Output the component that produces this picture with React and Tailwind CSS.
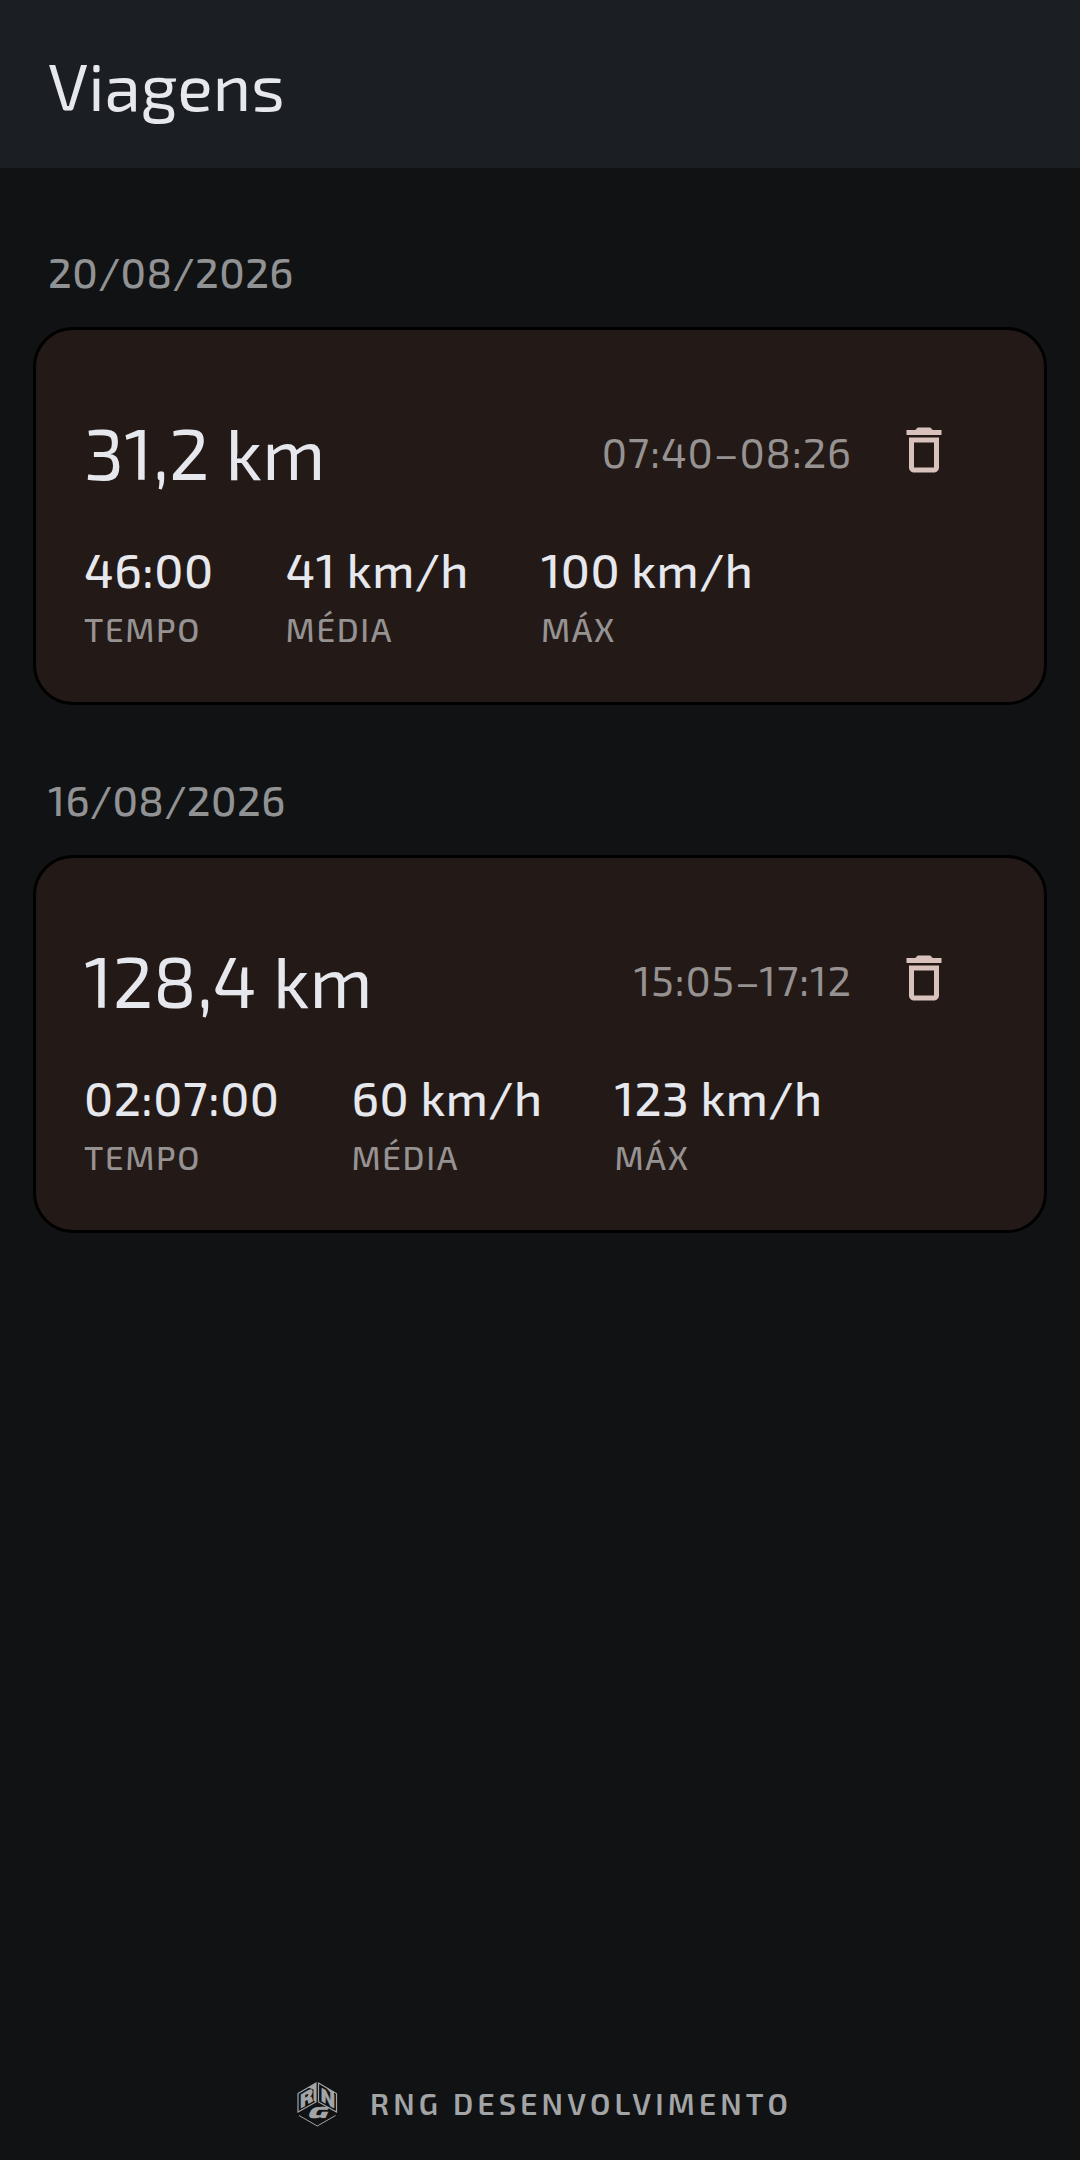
import { MdDeleteOutline } from 'react-icons/md';

const trips = [
  {
    id: 1,
    date: '20/08/2026',
    distance: '31,2 km',
    period: '07:40–08:26',
    stats: [
      { label: 'TEMPO', value: '46:00' },
      { label: 'MÉDIA', value: '41 km/h' },
      { label: 'MÁX', value: '100 km/h' },
    ],
  },
  {
    id: 2,
    date: '16/08/2026',
    distance: '128,4 km',
    period: '15:05–17:12',
    stats: [
      { label: 'TEMPO', value: '02:07:00' },
      { label: 'MÉDIA', value: '60 km/h' },
      { label: 'MÁX', value: '123 km/h' },
    ],
  },
];

function Logo() {
  return (
    <svg
      className="h-12 w-12 shrink-0"
      viewBox="0 -2 48 48"
      fill="none"
      stroke="currentColor"
      strokeWidth="1.2"
      fontFamily="'Exo 2', Roboto, sans-serif"
      fontWeight="900"
      aria-hidden="true"
    >
      {/* cube faces */}
      <path d="M4 12.500 22 2v19L4 31z" />
      <path d="M24.500 2l18 10.500V31l-18-10z" />
      <path d="M14 6.500 22 2v19.500l-2.500-2V8.500z" fill="currentColor" stroke="none" />
      <path d="M32 6.500l8 4.500v5z" fill="currentColor" stroke="none" />
      <path d="M5 34.500l18.300 10.500L41.500 34.500" strokeWidth="1" />
      {/* letters laid on each face */}
      <g fill="currentColor" stroke="none" fontSize="20" textAnchor="middle">
        <text transform="matrix(1 -0.577 0 1 12.500 24)">R</text>
        <text transform="matrix(1 0.577 0 1 34 24)">N</text>
        <text transform="matrix(1.500 0 -0.350 0.800 22.500 37)">G</text>
      </g>
    </svg>
  );
}

function Stat({ label, value }) {
  return (
    <div className="flex flex-col-reverse">
      <dt className="text-[33px] leading-[48px] font-medium tracking-wider text-[#969292]">{label}</dt>
      <dd className="text-5xl leading-[72px] font-medium tracking-[0.01em] text-[#e6e8ed]">{value}</dd>
    </div>
  );
}

function TripCard({ trip }) {
  return (
    <section>
      <h2 className="px-[15px] text-[42px] leading-[60px] font-medium tracking-[0.01em] text-[#919294]">
        {trip.date}
      </h2>
      <article className="mt-[26px] rounded-[40px] border-3 border-black bg-[#231a17] px-12 pt-12 pb-[49px]">
        <div className="flex items-center">
          <p className="flex-1 pt-0.5 text-7xl text-[#e6e8ed]">{trip.distance}</p>
          <span className="pt-0.5 text-[42px] tracking-[0.02em] text-[#969292]">{trip.period}</span>
          <button
            type="button"
            aria-label="Excluir viagem"
            className="flex h-36 w-36 items-center justify-center text-[#d8c2bb]"
          >
            <MdDeleteOutline className="h-15 w-15" />
          </button>
        </div>
        <dl className="mt-[11px] flex gap-18">
          {trip.stats.map((stat) => (
            <Stat key={stat.label} label={stat.label} value={stat.value} />
          ))}
        </dl>
      </article>
    </section>
  );
}

export default function App() {
  return (
    <div className="flex min-h-screen flex-col bg-[#111214] font-['Exo_2',Roboto,sans-serif]">
      <header className="bg-[#1b1f23] px-12 pt-[41px] pb-[39px]">
        <h1 className="text-[66px] leading-[88px] text-[#e6e8ed]">Viagens</h1>
      </header>
      <main className="flex flex-1 flex-col gap-16 px-[33px] pt-[73px]">
        {trips.map((trip) => (
          <TripCard key={trip.id} trip={trip} />
        ))}
      </main>
      <footer className="flex items-center justify-center gap-7 pt-6 pb-[33px] pl-1.5 text-[#a3a4a6]">
        <Logo />
        <span className="text-3xl font-semibold tracking-[0.14em]">RNG DESENVOLVIMENTO</span>
      </footer>
    </div>
  );
}
